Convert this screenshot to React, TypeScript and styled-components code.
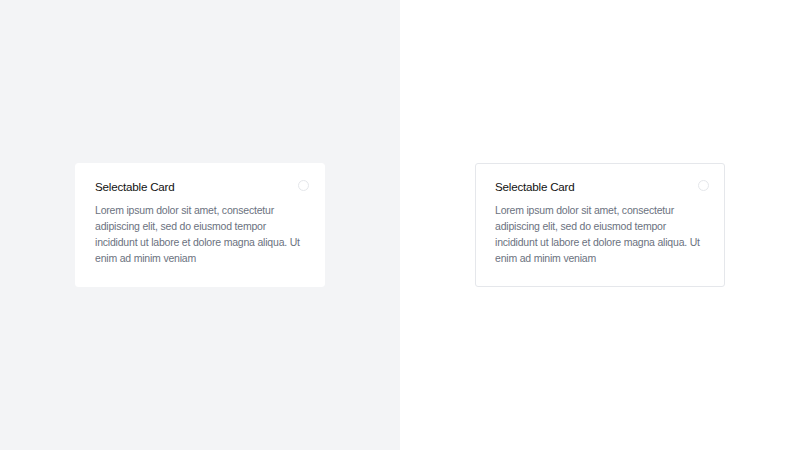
import styled, { createGlobalStyle } from 'styled-components'

const GlobalStyle = createGlobalStyle`
  html, body {
    margin: 0;
    padding: 0;
  }
  body {
    font-family: 'Liberation Sans', Arial, sans-serif;
  }
`

const Page = styled.div`
  display: grid;
  grid-template-columns: 1fr 1fr;
  width: 800px;
  height: 450px;
`

const Panel = styled.div<{ $muted: boolean }>`
  display: flex;
  align-items: center;
  justify-content: center;
  background: ${({ $muted }) => ($muted ? '#f3f4f6' : '#ffffff')};
`

const Card = styled.div<{ $bordered: boolean }>`
  box-sizing: border-box;
  width: 250px;
  height: 124px;
  padding: 15px 15px 22px 19px;
  background: #ffffff;
  border: 1px solid ${({ $bordered }) => ($bordered ? '#e5e7eb' : '#ffffff')};
  border-radius: 3px;
`

const CardHeader = styled.div`
  display: flex;
  align-items: center;
  justify-content: space-between;
  margin-bottom: 7px;
`

const CardTitle = styled.div`
  font-size: 11.6px;
  line-height: 16px;
  letter-spacing: -0.2px;
  color: #111111;
`

const Radio = styled.span`
  box-sizing: border-box;
  width: 11px;
  height: 11px;
  margin-top: -3px;
  border: 1px solid #e5e7eb;
  border-radius: 50%;
  background: #ffffff;
`

const CardBody = styled.p`
  margin: 0;
  padding-right: 1px;
  font-size: 10.5px;
  line-height: 16px;
  letter-spacing: -0.2px;
  color: #6b7280;
`

const text =
  'Lorem ipsum dolor sit amet, consectetur adipiscing elit, sed do eiusmod tempor incididunt ut labore et dolore magna aliqua. Ut enim ad minim veniam'

function SelectableCard({ bordered }: { bordered: boolean }) {
  return (
    <Card $bordered={bordered}>
      <CardHeader>
        <CardTitle>Selectable Card</CardTitle>
        <Radio />
      </CardHeader>
      <CardBody>{text}</CardBody>
    </Card>
  )
}

export default function App() {
  return (
    <>
      <GlobalStyle />
      <Page>
        <Panel $muted>
          <SelectableCard bordered={false} />
        </Panel>
        <Panel $muted={false}>
          <SelectableCard bordered />
        </Panel>
      </Page>
    </>
  )
}
